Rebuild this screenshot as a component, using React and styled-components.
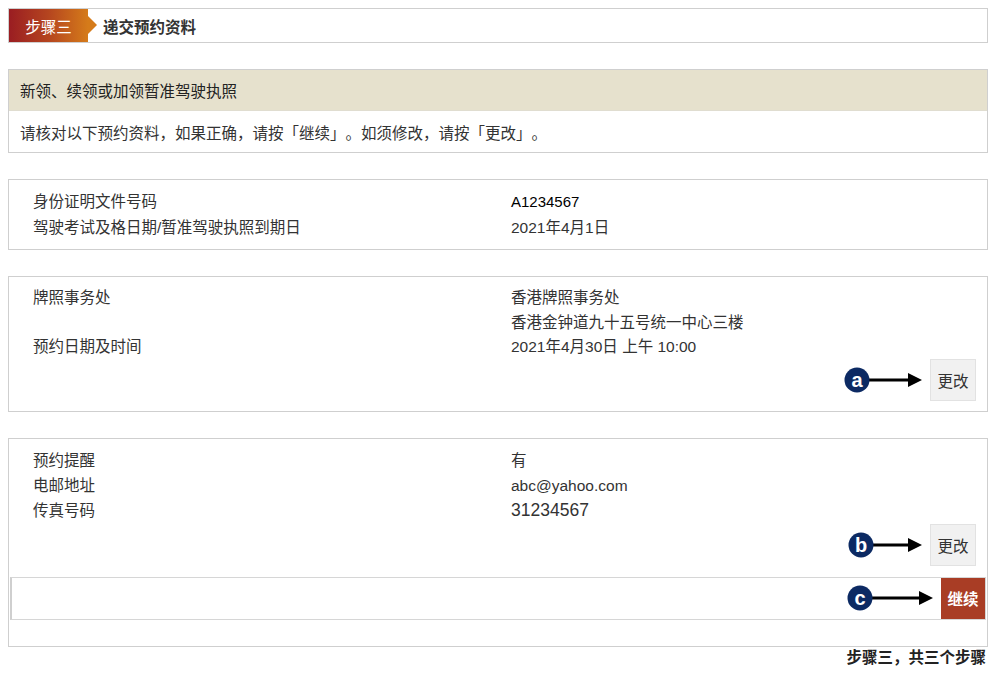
import React from 'react';
import styled, { createGlobalStyle } from 'styled-components';

const GlobalStyle = createGlobalStyle`
  body {
    margin: 8px;
    background: #fff;
    font-family: "Liberation Sans", "Noto Sans CJK SC", sans-serif;
    font-size: 15.5px;
    color: #333;
    text-spacing-trim: space-all;
  }
`;

const Callout = ({ letter, width = 82 }) => (
  <svg width={width} height="28" viewBox={`0 0 ${width} 28`}>
    <line x1="14" y1="14" x2={width - 16} y2="14" stroke="#000" strokeWidth="3" />
    <polygon
      points={`${width - 18},7 ${width - 4},14 ${width - 18},21`}
      fill="#000"
    />
    <circle cx="13" cy="14" r="12.5" fill="#0c2a63" />
    <text
      x="13"
      y="20.5"
      textAnchor="middle"
      fill="#fff"
      fontSize="20"
      fontWeight="bold"
      fontFamily="Liberation Sans, sans-serif"
    >
      {letter}
    </text>
  </svg>
);

export default function App() {
  return (
    <Page>
      <GlobalStyle />
      <StepBar>
        <StepBadge>步骤三</StepBadge>
        <StepTitle>递交预约资料</StepTitle>
      </StepBar>

      <Panel>
        <PanelHead>新领、续领或加领暂准驾驶执照</PanelHead>
        <PanelNote>请核对以下预约资料，如果正确，请按「继续」。如须修改，请按「更改」。</PanelNote>
      </Panel>

      <Panel>
        <InfoGrid rowHeight={26} bottom={8}>
          <Label>身份证明文件号码</Label>
          <Value strong>A1234567</Value>
          <Label>驾驶考试及格日期/暂准驾驶执照到期日</Label>
          <Value>2021年4月1日</Value>
        </InfoGrid>
      </Panel>

      <Panel>
        <InfoGrid rowHeight={24.5} bottom={10}>
          <Label>牌照事务处</Label>
          <Value>
            香港牌照事务处
            <br />
            香港金钟道九十五号统一中心三楼
          </Value>
          <Label>预约日期及时间</Label>
          <Value>2021年4月30日 上午 10:00</Value>
        </InfoGrid>
        <ActionRow lift={11}>
          <Callout letter="a" />
          <GreyButton>更改</GreyButton>
        </ActionRow>
      </Panel>

      <Panel>
        <InfoGrid rowHeight={25} bottom={10}>
          <Label>预约提醒</Label>
          <Value>有</Value>
          <Label>电邮地址</Label>
          <Value>abc@yahoo.com</Value>
          <Label>传真号码</Label>
          <Value large>31234567</Value>
        </InfoGrid>
        <ActionRow lift={9}>
          <Callout letter="b" width={78} />
          <GreyButton>更改</GreyButton>
        </ActionRow>
        <SubmitRow>
          <Callout letter="c" width={90} />
          <RedButton>继续</RedButton>
        </SubmitRow>
        <Spacer />
      </Panel>

      <Footer>步骤三，共三个步骤</Footer>
    </Page>
  );
}

const Page = styled.div`
  width: 980px;
  display: flex;
  flex-direction: column;
  gap: 26px;
`;

const StepBar = styled.div`
  display: flex;
  align-items: center;
  height: 33px;
  border: 1px solid #cfcfcf;
  background: #fff;
`;

const StepBadge = styled.div`
  position: relative;
  display: flex;
  align-items: center;
  justify-content: center;
  width: 79px;
  height: 33px;
  color: #fff;
  font-size: 15.5px;
  background: linear-gradient(90deg, #9a1d22 0%, #b5451f 50%, #d57b1a 100%);

  &::after {
    content: '';
    position: absolute;
    right: -9px;
    top: 7px;
    border-top: 9px solid transparent;
    border-bottom: 9px solid transparent;
    border-left: 9px solid #d57b1a;
  }
`;

const StepTitle = styled.div`
  margin-left: 15px;
  font-weight: bold;
  color: #333;
`;

const Panel = styled.div`
  border: 1px solid #cfcfcf;
  background: #fff;
  display: flex;
  flex-direction: column;
`;

const PanelHead = styled.div`
  height: 40px;
  display: flex;
  align-items: center;
  padding-left: 11px;
  background: #e6e1cd;
  border-bottom: 1px solid #e0ddd0;
  color: #222;
`;

const PanelNote = styled.div`
  height: 41px;
  display: flex;
  align-items: center;
  padding-left: 11px;
  color: #333;
`;

const InfoGrid = styled.div`
  display: grid;
  grid-template-columns: 478px 1fr;
  align-items: start;
  padding: 9px 0 ${props => props.bottom}px 24px;
  line-height: ${props => props.rowHeight}px;
`;

const Label = styled.div`
  color: #333;
`;

const Value = styled.div`
  color: ${props => (props.strong ? '#000' : '#333')};
  font-size: ${props => (props.large ? '17.5px' : props.strong ? '15px' : '15.5px')};
`;

const ActionRow = styled.div`
  display: flex;
  align-items: center;
  justify-content: flex-end;
  gap: 4px;
  padding: 0 11px 10px 0;
  margin-top: ${props => -props.lift}px;
`;

const GreyButton = styled.button`
  width: 46px;
  height: 42px;
  border: 1px solid #e2e2e2;
  background: #f1f1f1;
  color: #333;
  font-family: inherit;
  font-size: 15.5px;
  padding: 0;
  cursor: pointer;
`;

const SubmitRow = styled.div`
  display: flex;
  align-items: center;
  justify-content: flex-end;
  gap: 4px;
  height: 41px;
  margin: 1px 1px 0 1px;
  border: 1px solid #d6d6d6;
  border-left: 2px solid #cfcfcf;
`;

const RedButton = styled.button`
  width: 44px;
  height: 41px;
  border: none;
  background: #a93d25;
  color: #fff;
  font-family: inherit;
  font-size: 15.5px;
  font-weight: bold;
  padding: 0;
  cursor: pointer;
`;

const Spacer = styled.div`
  height: 26px;
`;

const Footer = styled.div`
  margin-top: -28px;
  text-align: right;
  padding-right: 2px;
  font-weight: bold;
  color: #222;
  font-size: 15.5px;
`;
